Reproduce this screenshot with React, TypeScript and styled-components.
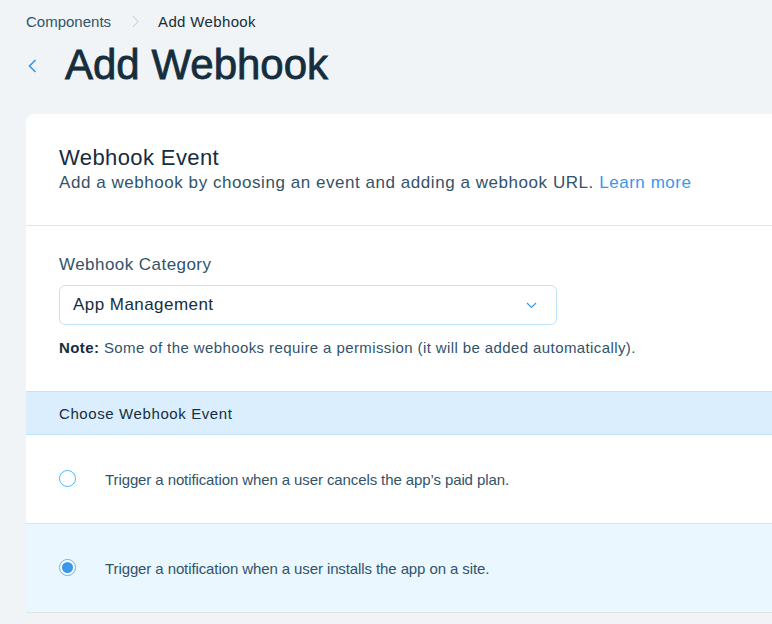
import React, {useState} from 'react';
import styled, {createGlobalStyle} from 'styled-components';

const GlobalStyle = createGlobalStyle`
    body {
        margin: 0;
        background: #f0f4f7;
        font-family: "Liberation Sans", Arial, sans-serif;
        color: #162d3d;
        overflow: hidden;
    }
`;

const Page = styled.div`
    padding: 12px 0 0 26px;
    min-height: 624px;
    box-sizing: border-box;
`;

const Breadcrumbs = styled.div`
    display: flex;
    align-items: center;
    height: 18px;
    font-size: 15px;
`;

const Crumb = styled.span<{active?: boolean}>`
    color: ${p => (p.active ? '#162d3d' : '#32536a')};
    letter-spacing: ${p => (p.active ? '0.35px' : '0')};
`;

const CrumbSep = styled.span`
    display: flex;
    margin: 0 19px 0 21px;
`;

const TitleRow = styled.div`
    display: flex;
    align-items: center;
    margin-top: 15px;
    height: 40px;
`;

const BackButton = styled.button`
    display: flex;
    border: none;
    background: none;
    padding: 0;
    margin: 2px 28px 0 2px;
    cursor: pointer;
`;

const Title = styled.h1`
    margin: 0;
    font-size: 42px;
    font-weight: 400;
    -webkit-text-stroke: 0.8px #162d3d;
    color: #162d3d;
`;

const Card = styled.div`
    margin-top: 29px;
    width: 780px;
    background: #fff;
    border-radius: 8px 0 0 0;
`;

const Section = styled.div<{divider?: boolean}>`
    padding: ${p => (p.divider ? '31px 33px 30px' : '27px 33px 33px')};
    border-bottom: ${p => (p.divider ? '1px solid #dfe5eb' : 'none')};
`;

const SectionTitle = styled.div`
    font-size: 22px;
    line-height: 26px;
    letter-spacing: 0.4px;
`;

const SectionText = styled.div`
    font-size: 17px;
    line-height: 24px;
    letter-spacing: 0.55px;
    color: #32536a;
`;

const Link = styled.a`
    color: #3899ec;
    text-decoration: none;
`;

const Label = styled.label`
    display: block;
    font-size: 17px;
    line-height: 24px;
    letter-spacing: 0.45px;
    color: #32536a;
`;

const Select = styled.div`
    display: flex;
    align-items: center;
    justify-content: space-between;
    margin-top: 8px;
    width: 498px;
    height: 40px;
    box-sizing: border-box;
    padding: 0 19px 0 13px;
    border: 1px solid #c1e4fe;
    border-radius: 6px;
    font-size: 17px;
    letter-spacing: 0.45px;
    color: #162d3d;
`;

const Note = styled.div`
    margin-top: 13px;
    font-size: 15px;
    line-height: 20px;
    letter-spacing: 0.4px;
    color: #32536a;

    b {
        color: #162d3d;
    }
`;

const ListHeader = styled.div`
    display: flex;
    align-items: center;
    height: 42px;
    padding: 0 33px;
    background: #daeefd;
    border-top: 1px solid #c1e4fe;
    border-bottom: 1px solid #c1e4fe;
    font-size: 15px;
    letter-spacing: 0.6px;
    color: #162d3d;
`;

const Row = styled.label<{selected?: boolean}>`
    display: flex;
    align-items: center;
    height: 88px;
    padding: 0 33px;
    background: ${p => (p.selected ? '#eaf7ff' : '#fff')};
    border-bottom: 1px solid #dfe5eb;
    cursor: pointer;
`;

const Radio = styled.span<{checked?: boolean}>`
    flex: none;
    display: flex;
    align-items: center;
    justify-content: center;
    width: 17px;
    height: 17px;
    box-sizing: border-box;
    border: 1px solid #4eb7f5;
    border-radius: 50%;
    margin-top: -2px;
    background: #fff;

    &::after {
        content: '';
        display: ${p => (p.checked ? 'block' : 'none')};
        width: 11px;
        height: 11px;
        border-radius: 50%;
        background: #3899ec;
    }
`;

const RowText = styled.span`
    margin-left: 29px;
    font-size: 15px;
    letter-spacing: -0.1px;
    color: #32536a;
`;

const events = [
    'Trigger a notification when a user cancels the app\u2019s paid plan.',
    'Trigger a notification when a user installs the app on a site.',
];

export default function App() {
    const [selected, setSelected] = useState(1);

    return (
        <Page>
            <GlobalStyle/>
            <Breadcrumbs>
                <Crumb>Components</Crumb>
                <CrumbSep>
                    <svg width="7" height="13" viewBox="0 0 7 13" fill="none">
                        <path d="M1 1l5 5.5L1 12" stroke="#c1ccd5" strokeWidth="1"/>
                    </svg>
                </CrumbSep>
                <Crumb active>Add Webhook</Crumb>
            </Breadcrumbs>
            <TitleRow>
                <BackButton aria-label="back">
                    <svg width="9" height="14" viewBox="0 0 9 14" fill="none">
                        <path d="M7.5 1L1.5 7l6 6" stroke="#3899ec" strokeWidth="1.6"/>
                    </svg>
                </BackButton>
                <Title>Add Webhook</Title>
            </TitleRow>
            <Card>
                <Section divider>
                    <SectionTitle>Webhook Event</SectionTitle>
                    <SectionText>
                        Add a webhook by choosing an event and adding a webhook URL. <Link href="#">Learn more</Link>
                    </SectionText>
                </Section>
                <Section>
                    <Label>Webhook Category</Label>
                    <Select>
                        <span>App Management</span>
                        <svg width="11" height="7" viewBox="0 0 11 7" fill="none">
                            <path d="M1 1l4.5 4.5L10 1" stroke="#3899ec" strokeWidth="1.2"/>
                        </svg>
                    </Select>
                    <Note><b>Note:</b> Some of the webhooks require a permission (it will be added automatically).</Note>
                </Section>
                <ListHeader>Choose Webhook Event</ListHeader>
                {events.map((text, i) => (
                    <Row key={i} selected={selected === i} onClick={() => setSelected(i)}>
                        <Radio checked={selected === i}/>
                        <RowText>{text}</RowText>
                    </Row>
                ))}
            </Card>
        </Page>
    );
}
